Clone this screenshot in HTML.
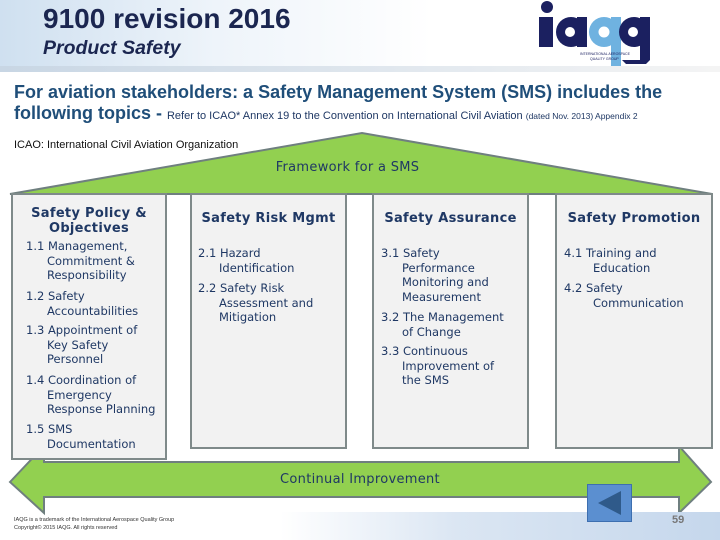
<!DOCTYPE html><html><head><meta charset="utf-8"><style>
body{margin:0;width:720px;height:540px;position:relative;overflow:hidden;background:#fff;font-family:"Liberation Sans",sans-serif}
.a{position:absolute;white-space:nowrap}
.box{position:absolute;background:#f2f2f2;border:2px solid #7f8a8a;box-sizing:border-box}
.t{font-family:"DejaVu Sans",sans-serif;color:#1f3864;font-size:11.5px;line-height:14.5px;position:absolute;white-space:nowrap}
.t i{font-style:normal;display:inline-block;width:21px}
.h{font-family:"DejaVu Sans",sans-serif;color:#1f3864;font-size:13px;font-weight:bold;letter-spacing:.3px;position:absolute;white-space:nowrap;text-align:center}
</style></head><body>
<div class="a" style="left:0;top:0;width:540px;height:70px;background:linear-gradient(90deg,#cfe0f0,#eef4fa 40%,#fff 80%)"></div>
<div class="a" style="left:0;top:66px;width:720px;height:6px;background:linear-gradient(90deg,#c8d6e4,#e3e9ef 60%,#f4f4f4)"></div>
<div class="a" style="left:43px;top:3px;font-size:28px;font-weight:bold;color:#1b2650">9100 revision 2016</div>
<div class="a" style="left:43px;top:37px;font-size:19.5px;font-weight:bold;font-style:italic;color:#1b2650">Product Safety</div>
<svg class="a" style="left:530px;top:0" width="125" height="70">
<circle cx="17" cy="7" r="6" fill="#1b2060"/><rect x="9" y="17" width="14" height="30" fill="#1b2060"/>
<circle cx="41" cy="32" r="15" fill="#1b2060"/><rect x="47" y="17" width="10" height="30" fill="#1b2060"/><circle cx="40" cy="32" r="5" fill="#fff"/>
<circle cx="74" cy="32" r="15" fill="#6fb2e0"/><rect x="81" y="17" width="10" height="49" fill="#6fb2e0"/><circle cx="74" cy="32" r="6" fill="#fff" stroke="#6fb2e0" stroke-width="1"/>
<circle cx="104" cy="32" r="15" fill="#1b2060"/><rect x="110" y="17" width="10" height="43" fill="#1b2060"/><path d="M92 60 L120 60 L116 64 L96 64Z" fill="#1b2060"/><circle cx="103" cy="32" r="5" fill="#fff"/>
<text x="50" y="55" font-size="3.5" fill="#1b2060">INTERNATIONAL AEROSPACE</text><text x="60" y="60" font-size="3.5" fill="#1b2060">QUALITY GROUP</text></svg>
<div class="a" style="left:14px;top:82px;font-size:18px;font-weight:bold;color:#1f4e79">For aviation stakeholders: a Safety Management System (SMS) includes the</div>
<div class="a" style="left:14px;top:103px;font-size:18px;font-weight:bold;color:#1f4e79">following topics - <span style="font-size:11px;font-weight:normal;color:#1f3864">Refer to ICAO* Annex 19 to the Convention on International Civil Aviation <span style="font-size:8.5px">(dated Nov. 2013) Appendix 2</span></span></div>
<svg class="a" style="left:0;top:0" width="720" height="540">
<polygon points="10,194 362,133 712,194" fill="#92d050" stroke="#6f7f7f" stroke-width="2"/>
<polygon points="10,482 44,446 44,462 679,462 679,446 711,482 679,513 679,497 44,497 44,513" fill="#92d050" stroke="#6f7f7f" stroke-width="2"/>
</svg>
<div class="a" style="left:14px;top:139px;font-size:11px;color:#111">ICAO: International Civil Aviation Organization</div>
<div class="h" style="left:0;width:695px;top:160px;font-weight:normal;color:#1f3864">Framework for a SMS</div>
<div class="box" style="left:11px;top:193px;width:156px;height:267px"></div>
<div class="box" style="left:190px;top:193px;width:157px;height:256px"></div>
<div class="box" style="left:372px;top:193px;width:157px;height:256px"></div>
<div class="box" style="left:555px;top:193px;width:158px;height:256px"></div>
<div class="h" style="left:11px;width:156px;top:206px">Safety Policy &amp;<br>Objectives</div>
<div class="t" style="left:26px;top:239px">1.1 Management,<br><i></i>Commitment &amp;<br><i></i>Responsibility</div>
<div class="t" style="left:26px;top:289px">1.2 Safety<br><i></i>Accountabilities</div>
<div class="t" style="left:26px;top:323px">1.3 Appointment of<br><i></i>Key Safety<br><i></i>Personnel</div>
<div class="t" style="left:26px;top:373px">1.4 Coordination of<br><i></i>Emergency<br><i></i>Response Planning</div>
<div class="t" style="left:26px;top:422px">1.5 SMS<br><i></i>Documentation</div>
<div class="h" style="left:190px;width:157px;top:211px">Safety Risk Mgmt</div>
<div class="t" style="left:198px;top:246px">2.1 Hazard<br><i></i>Identification</div>
<div class="t" style="left:198px;top:281px">2.2 Safety Risk<br><i></i>Assessment and<br><i></i>Mitigation</div>
<div class="h" style="left:372px;width:157px;top:211px">Safety Assurance</div>
<div class="t" style="left:381px;top:246px">3.1 Safety<br><i></i>Performance<br><i></i>Monitoring and<br><i></i>Measurement</div>
<div class="t" style="left:381px;top:310px">3.2 The Management<br><i></i>of Change</div>
<div class="t" style="left:381px;top:344px">3.3 Continuous<br><i></i>Improvement of<br><i></i>the SMS</div>
<div class="h" style="left:555px;width:158px;top:211px">Safety Promotion</div>
<div class="t" style="left:564px;top:246px">4.1 Training and<br><i style="width:29px"></i>Education</div>
<div class="t" style="left:564px;top:281px">4.2 Safety<br><i style="width:29px"></i>Communication</div>
<div class="h" style="left:0;width:720px;top:472px;font-weight:normal;color:#1f3864">Continual Improvement</div>
<div class="a" style="left:280px;top:512px;width:440px;height:28px;background:linear-gradient(90deg,#fff,#dbe6f3 40%,#c5d7ec)"></div>
<div class="a" style="left:587px;top:484px;width:45px;height:38px;background:#5b8fd0;border:1px solid #3d6fb0;box-sizing:border-box"></div>
<svg class="a" style="left:595px;top:489px" width="30" height="28"><polygon points="3,14 26,2 26,26" fill="#2f5a8a"/></svg>
<div class="a" style="left:672px;top:514px;font-size:11px;font-weight:bold;color:#777">59</div>
<div class="a" style="left:14px;top:516px;font-size:5.5px;color:#333;line-height:8px">IAQG is a trademark of the International Aerospace Quality Group<br>Copyright© 2015 IAQG. All rights reserved</div>
</body></html>
